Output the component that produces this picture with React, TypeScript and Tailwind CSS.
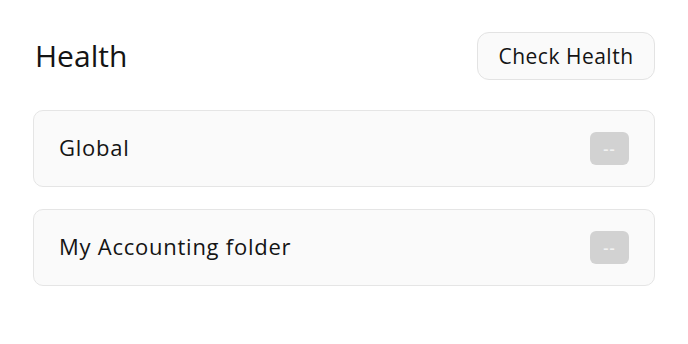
const items = ["Global", "My Accounting folder"];

export default function App() {
  return (
    <div
      className="min-h-screen bg-white px-[33px] pt-[32px] text-[#141414]"
      style={{ fontFamily: '"Open Sans", "Noto Sans", sans-serif' }}
    >
      <div className="flex h-[48px] items-center justify-between">
        <h1 className="pb-[1px] pl-[2px] text-[30px] font-medium leading-none">Health</h1>
        <button className="h-[48px] w-[178px] rounded-[12px] border border-[#e3e3e3] bg-[#fafafa] text-[21px] font-medium leading-none tracking-[0.5px]">
          Check Health
        </button>
      </div>

      <div className="mt-[30px] flex flex-col gap-[22px]">
        {items.map((name) => (
          <div
            key={name}
            className="flex h-[77px] items-center justify-between rounded-[10px] border border-[#e5e5e5] bg-[#fafafa] pl-[25px] pr-[25px]"
          >
            <span className="pb-[4px] text-[22px] font-medium leading-none tracking-[0.75px]">{name}</span>
            <span className="flex h-[33px] w-[39px] items-center justify-center rounded-[6px] bg-[#d2d2d2] text-[16px] font-semibold tracking-[1px] text-[#f2f2f2]">
              --
            </span>
          </div>
        ))}
      </div>
    </div>
  );
}
